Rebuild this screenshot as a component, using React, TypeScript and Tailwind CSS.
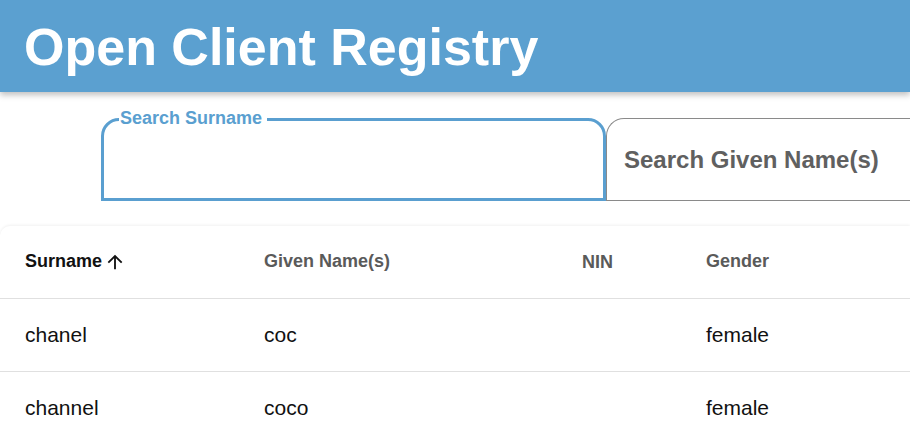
import React from "react";

const rows = [
  { surname: "chanel", given: "coc", nin: "", gender: "female" },
  { surname: "channel", given: "coco", nin: "", gender: "female" },
];

function ArrowUp() {
  return (
    <svg width="22" height="22" viewBox="0 0 24 24" className="ml-0.5">
      <path d="M4 12l1.41 1.41L11 7.83V20h2V7.83l5.58 5.59L20 12l-8-8-8 8z" fill="#111" />
    </svg>
  );
}

export default function App() {
  return (
    <div
      className="h-[442px] w-[910px] overflow-hidden bg-white"
      style={{ fontFamily: '"Liberation Sans", Arial, sans-serif' }}
    >
      {/* app bar */}
      <header className="relative z-10 flex h-[92px] items-center bg-[#5ba0d0] pl-[24px] shadow-[0_3px_6px_rgba(0,0,0,0.25)]">
        <h1 className="pt-[2px] text-[52px] font-bold leading-none text-white">Open Client Registry</h1>
      </header>

      {/* search fields */}
      <div className="flex pl-[101px] pt-[26px]">
        <div className="relative h-[83px] w-[505px] shrink-0 rounded-t-[18px] border-[3px] border-[#5a9fd0]">
          <span className="absolute -top-[12px] left-[15px] bg-white pr-[5px] pl-[1px] text-[18px] font-bold leading-none text-[#5a9fd0]">
            Search Surname
          </span>
        </div>
        <div className="flex h-[83px] w-[400px] shrink-0 items-center rounded-tl-[18px] border border-r-0 border-[#8a8a8a] pl-[17px]">
          <span className="text-[24px] font-bold text-[#606060]">Search Given Name(s)</span>
        </div>
      </div>

      {/* results table */}
      <div className="mt-[25px] rounded-tl-[10px] bg-white shadow-[0_-1px_3px_rgba(0,0,0,0.06)]">
        <table className="w-full table-fixed border-collapse">
          <colgroup>
            <col className="w-[264px]" />
            <col className="w-[318px]" />
            <col className="w-[124px]" />
            <col />
          </colgroup>
          <thead>
            <tr className="h-[72px] border-b border-[#e0e0e0] text-[18px] font-bold">
              <th className="pl-[25px] text-left">
                <span className="flex items-center text-[#111]">
                  Surname
                  <ArrowUp />
                </span>
              </th>
              <th className="text-left text-[#5a5a5a]">Given Name(s)</th>
              <th className="pt-[2px] text-left text-[#5a5a5a]">NIN</th>
              <th className="text-left text-[#5a5a5a]">Gender</th>
            </tr>
          </thead>
          <tbody>
            {rows.map((r) => (
              <tr key={r.surname} className="h-[73px] border-b border-[#e0e0e0] text-[21px] text-[#111]">
                <td className="pl-[25px]">{r.surname}</td>
                <td>{r.given}</td>
                <td>{r.nin}</td>
                <td>{r.gender}</td>
              </tr>
            ))}
          </tbody>
        </table>
      </div>
    </div>
  );
}
